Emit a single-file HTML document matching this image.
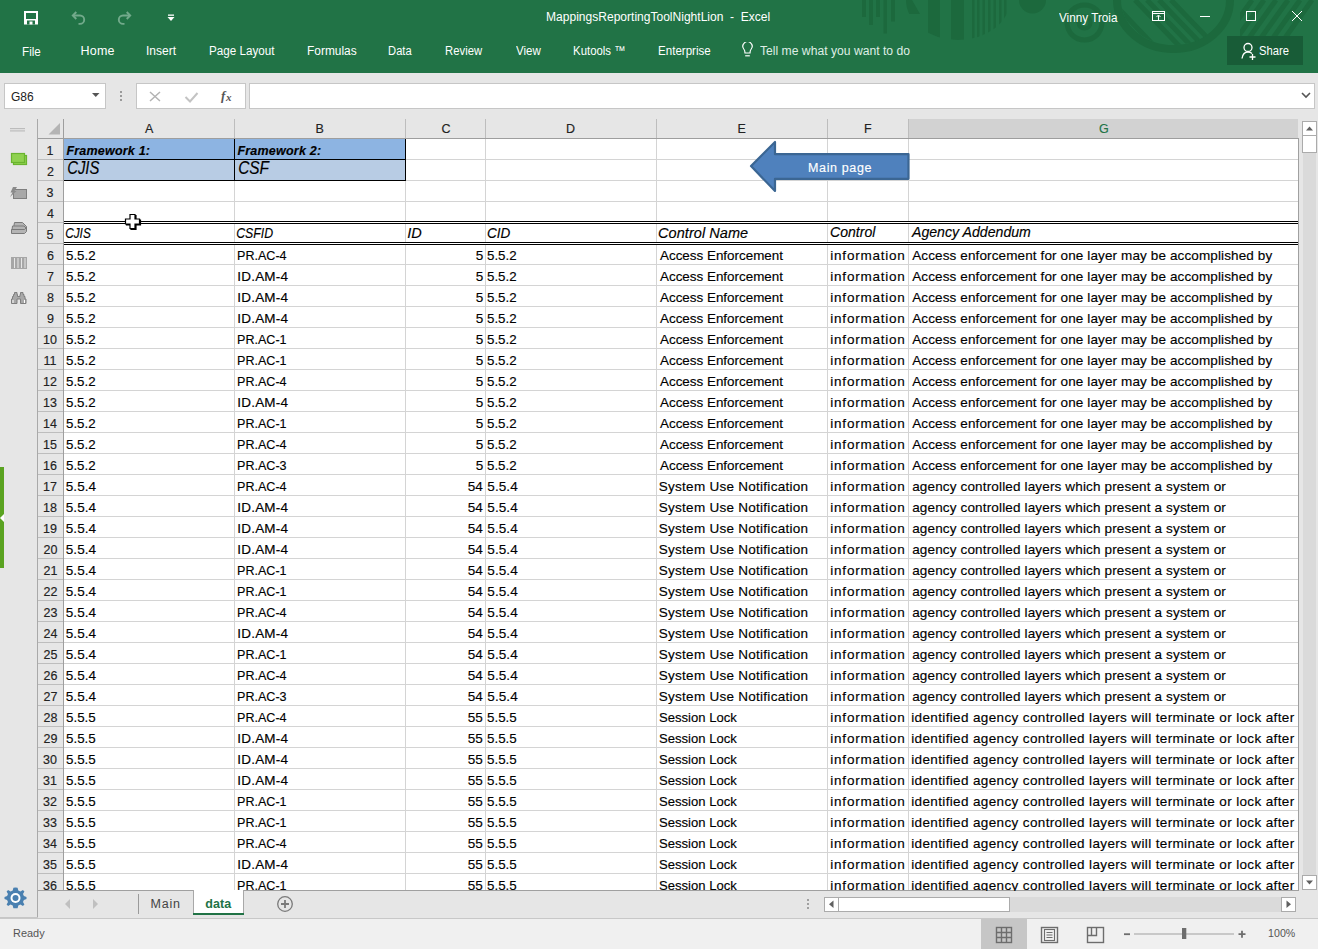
<!DOCTYPE html>
<html><head><meta charset="utf-8">
<style>
html,body{margin:0;padding:0;width:1318px;height:949px;overflow:hidden;background:#e6e6e6;font-family:"Liberation Sans",sans-serif;}
.a{position:absolute}
.t{position:absolute;white-space:pre;font-family:"Liberation Sans",sans-serif}
.g{-webkit-text-stroke:0.15px currentColor}
.vl{position:absolute;top:139px;height:751px;width:1px;background:#d4d4d4}
.hl{position:absolute;left:64px;width:1234px;height:1px;background:#d4d4d4}
</style></head><body>
<!-- ribbon -->
<div class="a" style="left:0;top:0;width:1318px;height:73px;background:#217346"></div>
<svg class="a" style="left:0;top:0" width="1318" height="73">
  <defs>
    <clipPath id="bowl1"><path d="M906 0 A52 40 0 0 0 1010 0 Z"/></clipPath>
    <clipPath id="bowl2"><path d="M1121 0 A53 45 0 0 0 1227 0 Z"/></clipPath>
    <clipPath id="rt"><rect x="1240" y="0" width="78" height="38"/></clipPath>
  </defs>
  <g fill="#1c693d">
    <rect x="862" y="0" width="4" height="17"/><rect x="869" y="0" width="4" height="25"/><rect x="876" y="0" width="4" height="17"/>
    <rect x="883.5" y="0" width="3.5" height="33.5"/><rect x="891" y="0" width="4" height="21.5"/>
    <g clip-path="url(#bowl1)">
      <path d="M906 0 L912 0 L920 14 L906 14 Z"/>
      <rect x="928" y="0" width="12" height="40"/>
      <rect x="951" y="0" width="13" height="40"/>
      <rect x="972" y="0" width="2.5" height="40"/><rect x="977" y="0" width="2.5" height="40"/><rect x="982.5" y="0" width="2.5" height="40"/>
      <rect x="988" y="0" width="2.5" height="40"/><rect x="993.5" y="0" width="2.5" height="40"/><rect x="999" y="0" width="2.5" height="40"/>
      <rect x="1004" y="0" width="2.5" height="40"/>
    </g>
    <path d="M1019 0 A13.5 13.5 0 0 0 1046 0 Z"/>
  </g>
  <g fill="none" stroke="#1c693d">
    <circle cx="1084.5" cy="22.5" r="17.5" stroke-width="5"/>
    <circle cx="1084.5" cy="22.5" r="6" stroke-width="4"/>
    <path d="M1117 0 A56.5 49 0 0 0 1230 0" stroke-width="8"/>
    <g clip-path="url(#bowl2)" stroke-width="5">
      <path d="M1135 0 L1185 52 M1147 0 L1197 52 M1159 0 L1209 52 M1171 0 L1221 52 M1120 10 L1160 52"/>
    </g>
    <g clip-path="url(#rt)" stroke-width="5">
      <path d="M1252 0 L1225 38 M1264 0 L1237 38 M1276 0 L1249 38 M1288 0 L1261 38 M1300 0 L1273 38 M1312 0 L1285 38"/>
    </g>
  </g>
</svg>
<!-- qat icons -->
<svg class="a" style="left:0;top:0" width="200" height="33">
  <rect x="24" y="11" width="14" height="13.5" fill="#fff"/>
  <rect x="26" y="13" width="10" height="6" fill="#217346"/>
  <rect x="27" y="20.5" width="8" height="4" fill="#217346"/>
  <rect x="29.5" y="21.5" width="3" height="3" fill="#fff"/>
  <g fill="none" stroke="#72aa8b" stroke-width="1.9">
    <path d="M73 15.5 H80 A4.2 4.2 0 0 1 80 23.9 H78.5"/><path d="M76.3 12 L72.8 15.5 L76.3 19"/>
    <path d="M130 15.5 H123 A4.2 4.2 0 0 0 123 23.9 H124.5"/><path d="M126.7 12 L130.2 15.5 L126.7 19"/>
  </g>
  <rect x="168" y="14.5" width="6" height="1.3" fill="#fff"/>
  <path d="M167.5 17 H174.5 L171 21 Z" fill="#fff"/>
</svg>
<!-- window controls -->
<svg class="a" style="left:1140px;top:0" width="178" height="33">
  <g fill="none" stroke="#fff" stroke-width="1">
    <rect x="12.5" y="11.5" width="12" height="9"/><path d="M12.5 13.5 H24.5"/><path d="M18.5 20.5 V15.5 M16.5 17 L18.5 15 L20.5 17"/>
    <path d="M60 16.5 H70"/>
    <rect x="106.5" y="11.5" width="9" height="9"/>
    <path d="M152 11 L162 21 M162 11 L152 21"/>
  </g>
</svg>
<!-- share -->
<div class="a" style="left:1227px;top:36px;width:76px;height:29px;background:#185c37"></div>
<svg class="a" style="left:1238px;top:40px" width="22" height="22">
  <g fill="none" stroke="#fff" stroke-width="1.3">
    <circle cx="10" cy="7.5" r="4"/><path d="M4 18.5 Q5 12 10 12 Q12.5 12 14 13.5"/><path d="M14.5 14 V20 M11.5 17 H17.5"/>
  </g>
</svg>
<!-- bulb -->
<svg class="a" style="left:740px;top:42px" width="16" height="16">
  <g fill="none" stroke="#fff" stroke-width="1.2">
    <path d="M5 11 Q5 8.5 3.8 7 A4.6 4.6 0 1 1 11.2 7 Q10 8.5 10 11 Z"/><path d="M5.2 13.8 H9.8"/>
  </g>
</svg>

<!-- formula bar -->
<div class="a" style="left:4px;top:83px;width:100px;height:24px;background:#fff;border:1px solid #c6c6c6"></div>
<svg class="a" style="left:90px;top:90px" width="12" height="10"><path d="M2 3 H9.5 L5.75 7 Z" fill="#555"/></svg>
<svg class="a" style="left:118px;top:89px" width="6" height="14"><g fill="#9a9a9a"><rect x="2" y="2" width="2" height="2"/><rect x="2" y="6" width="2" height="2"/><rect x="2" y="10" width="2" height="2"/></g></svg>
<div class="a" style="left:136px;top:83px;width:108px;height:24px;background:#fff;border:1px solid #c6c6c6"></div>
<svg class="a" style="left:140px;top:85px" width="105" height="22">
  <g fill="none" stroke="#b3b3b3" stroke-width="1.5"><path d="M10 7 L20 16 M20 7 L10 16"/></g>
  <g fill="none" stroke="#c3c3c3" stroke-width="2"><path d="M45.5 12 L50 16.5 L57.5 8"/></g>
  <text x="81" y="15" font-family="Liberation Serif" font-style="italic" font-weight="bold" font-size="13" fill="#555">f</text>
  <text x="86" y="15.5" font-family="Liberation Serif" font-style="italic" font-weight="bold" font-size="11" fill="#555">x</text>
</svg>
<div class="a" style="left:249px;top:83px;width:1064px;height:24px;background:#fff;border:1px solid #c6c6c6"></div>
<svg class="a" style="left:1300px;top:90px" width="12" height="10"><path d="M2 3 L6 7 L10 3" fill="none" stroke="#555" stroke-width="1.6"/></svg>

<!-- left pane -->
<div class="a" style="left:37px;top:119px;width:1px;height:798px;background:#a9a9a9"></div>
<svg class="a" style="left:0;top:118px" width="37" height="200">
  <g fill="#bcbcbc"><rect x="10" y="10" width="15" height="1.2"/><rect x="10" y="12.3" width="15" height="1.2"/></g>
  <rect x="13.5" y="37.5" width="13" height="9" fill="#8fd14f" stroke="#6ab42f" stroke-width="1.2"/>
  <rect x="11.5" y="35.5" width="13" height="9" fill="#8fd14f" stroke="#6ab42f" stroke-width="1.2"/>
  <rect x="13.5" y="71.5" width="13" height="9" fill="#a8a8a8" stroke="#7f7f7f" stroke-width="1"/>
  <path d="M13 69 H17 L14.5 73 H16.5 L10 79 L12.5 74.5 H10.5 Z" fill="#8a8a8a"/>
  <g fill="#b4b4b4" stroke="#7a7a7a" stroke-width="1">
    <path d="M14.5 104.5 H22.5 L26.5 108.5 V110 H13.5 Z"/>
    <path d="M12.5 108 H24 L26.5 110.5 V112 H12 Z"/>
    <path d="M11.5 111.5 H24.5 L26.5 109.5 V113.5 L24.5 115.5 H11.5 Z"/>
  </g>
  <g fill="#a6a6a6"><rect x="11" y="139" width="16" height="12"/></g>
  <g fill="#e6e6e6"><rect x="14" y="140" width="1" height="10"/><rect x="17.5" y="140" width="1" height="10"/><rect x="21" y="140" width="1" height="10"/><rect x="24.5" y="140" width="1" height="10"/></g>
  <g fill="#a0a0a0">
    <path d="M11.5 185.5 V181 H12.5 V178.5 H13.5 V176.5 H14.5 V174.5 H17 V176.5 H17.5 V178.5 H20 V176.5 H20.5 V174.5 H23 V176.5 H24 V178.5 H25 V181 H26 V185.5 H20.5 V181 H17 V185.5 Z" fill="#a8a8a8" stroke="#7f7f7f" stroke-width="1"/><rect x="12.5" y="182" width="1" height="3" fill="#fff"/><rect x="24" y="182" width="1" height="3" fill="#fff"/>
  </g>
</svg>
<div class="a" style="left:0;top:467px;width:4px;height:101px;background:#5aa321"></div>
<svg class="a" style="left:0;top:512px" width="4" height="12"><path d="M4 2 L0 6 L4 10 Z" fill="#fff"/></svg>
<svg class="a" style="left:3px;top:886px" width="25" height="24">
  <path fill="#4a80b0" d="M12.5 1.5 L14.6 1.8 L15.3 4.6 L17.4 5.5 L19.9 4 L21.4 5.5 L20 8 L20.9 10.1 L23.5 10.9 V13.1 L20.9 13.9 L20 16 L21.4 18.5 L19.9 20 L17.4 18.6 L15.3 19.4 L14.6 22.2 H10.4 L9.7 19.4 L7.6 18.6 L5.1 20 L3.6 18.5 L5 16 L4.1 13.9 L1.5 13.1 V10.9 L4.1 10.1 L5 8 L3.6 5.5 L5.1 4 L7.6 5.5 L9.7 4.6 L10.4 1.8 Z"/>
  <circle cx="12.5" cy="12" r="5" fill="#fff"/><circle cx="12.5" cy="12" r="3" fill="#4a80b0"/>
</svg>

<!-- grid area -->
<div class="a" style="left:38px;top:119px;width:1260px;height:771px;background:#fff"></div>
<!-- headers -->
<div class="a" style="left:38px;top:119px;width:1260px;height:19px;background:#e6e6e6"></div>
<div class="a" style="left:909px;top:119px;width:389px;height:19px;background:#d2d2d2"></div>
<div class="a" style="left:38px;top:139px;width:25px;height:751px;background:#e6e6e6"></div>
<div class="a" style="left:38px;top:138px;width:1260px;height:1px;background:#9e9e9e"></div>
<div class="a" style="left:63px;top:119px;width:1px;height:771px;background:#9e9e9e"></div>
<svg class="a" style="left:38px;top:119px" width="25" height="19"><path d="M10.5 15.5 L22 15.5 L22 4 Z" fill="#b4b4b4"/></svg>
<div style="position:absolute;left:234px;width:1px;top:119px;height:19px;background:#bdbdbd"></div>
<div style="position:absolute;left:405px;width:1px;top:119px;height:19px;background:#bdbdbd"></div>
<div style="position:absolute;left:485px;width:1px;top:119px;height:19px;background:#bdbdbd"></div>
<div style="position:absolute;left:656px;width:1px;top:119px;height:19px;background:#bdbdbd"></div>
<div style="position:absolute;left:827px;width:1px;top:119px;height:19px;background:#bdbdbd"></div>
<div style="position:absolute;left:908px;width:1px;top:119px;height:19px;background:#bdbdbd"></div>
<div style="position:absolute;left:38px;width:25px;top:159px;height:1px;background:#bdbdbd"></div>
<div style="position:absolute;left:38px;width:25px;top:180px;height:1px;background:#bdbdbd"></div>
<div style="position:absolute;left:38px;width:25px;top:201px;height:1px;background:#bdbdbd"></div>
<div style="position:absolute;left:38px;width:25px;top:222px;height:1px;background:#bdbdbd"></div>
<div style="position:absolute;left:38px;width:25px;top:243px;height:1px;background:#bdbdbd"></div>
<div style="position:absolute;left:38px;width:25px;top:264px;height:1px;background:#bdbdbd"></div>
<div style="position:absolute;left:38px;width:25px;top:285px;height:1px;background:#bdbdbd"></div>
<div style="position:absolute;left:38px;width:25px;top:306px;height:1px;background:#bdbdbd"></div>
<div style="position:absolute;left:38px;width:25px;top:327px;height:1px;background:#bdbdbd"></div>
<div style="position:absolute;left:38px;width:25px;top:348px;height:1px;background:#bdbdbd"></div>
<div style="position:absolute;left:38px;width:25px;top:369px;height:1px;background:#bdbdbd"></div>
<div style="position:absolute;left:38px;width:25px;top:390px;height:1px;background:#bdbdbd"></div>
<div style="position:absolute;left:38px;width:25px;top:411px;height:1px;background:#bdbdbd"></div>
<div style="position:absolute;left:38px;width:25px;top:432px;height:1px;background:#bdbdbd"></div>
<div style="position:absolute;left:38px;width:25px;top:453px;height:1px;background:#bdbdbd"></div>
<div style="position:absolute;left:38px;width:25px;top:474px;height:1px;background:#bdbdbd"></div>
<div style="position:absolute;left:38px;width:25px;top:495px;height:1px;background:#bdbdbd"></div>
<div style="position:absolute;left:38px;width:25px;top:516px;height:1px;background:#bdbdbd"></div>
<div style="position:absolute;left:38px;width:25px;top:537px;height:1px;background:#bdbdbd"></div>
<div style="position:absolute;left:38px;width:25px;top:558px;height:1px;background:#bdbdbd"></div>
<div style="position:absolute;left:38px;width:25px;top:579px;height:1px;background:#bdbdbd"></div>
<div style="position:absolute;left:38px;width:25px;top:600px;height:1px;background:#bdbdbd"></div>
<div style="position:absolute;left:38px;width:25px;top:621px;height:1px;background:#bdbdbd"></div>
<div style="position:absolute;left:38px;width:25px;top:642px;height:1px;background:#bdbdbd"></div>
<div style="position:absolute;left:38px;width:25px;top:663px;height:1px;background:#bdbdbd"></div>
<div style="position:absolute;left:38px;width:25px;top:684px;height:1px;background:#bdbdbd"></div>
<div style="position:absolute;left:38px;width:25px;top:705px;height:1px;background:#bdbdbd"></div>
<div style="position:absolute;left:38px;width:25px;top:726px;height:1px;background:#bdbdbd"></div>
<div style="position:absolute;left:38px;width:25px;top:747px;height:1px;background:#bdbdbd"></div>
<div style="position:absolute;left:38px;width:25px;top:768px;height:1px;background:#bdbdbd"></div>
<div style="position:absolute;left:38px;width:25px;top:789px;height:1px;background:#bdbdbd"></div>
<div style="position:absolute;left:38px;width:25px;top:810px;height:1px;background:#bdbdbd"></div>
<div style="position:absolute;left:38px;width:25px;top:831px;height:1px;background:#bdbdbd"></div>
<div style="position:absolute;left:38px;width:25px;top:852px;height:1px;background:#bdbdbd"></div>
<div style="position:absolute;left:38px;width:25px;top:873px;height:1px;background:#bdbdbd"></div>
<div style="position:absolute;left:38px;width:25px;top:894px;height:1px;background:#bdbdbd"></div>
<!-- fills -->
<div class="a" style="left:64px;top:139px;width:341px;height:20px;background:#8db4e2"></div>
<div class="a" style="left:64px;top:160px;width:341px;height:20px;background:#b8cce4"></div>
<div class="vl" style="left:234px"></div>
<div class="vl" style="left:405px"></div>
<div class="vl" style="left:485px"></div>
<div class="vl" style="left:656px"></div>
<div class="vl" style="left:827px"></div>
<div class="vl" style="left:908px"></div>
<div class="hl" style="top:159px"></div>
<div class="hl" style="top:180px"></div>
<div class="hl" style="top:201px"></div>
<div class="hl" style="top:222px"></div>
<div class="hl" style="top:243px"></div>
<div class="hl" style="top:264px"></div>
<div class="hl" style="top:285px"></div>
<div class="hl" style="top:306px"></div>
<div class="hl" style="top:327px"></div>
<div class="hl" style="top:348px"></div>
<div class="hl" style="top:369px"></div>
<div class="hl" style="top:390px"></div>
<div class="hl" style="top:411px"></div>
<div class="hl" style="top:432px"></div>
<div class="hl" style="top:453px"></div>
<div class="hl" style="top:474px"></div>
<div class="hl" style="top:495px"></div>
<div class="hl" style="top:516px"></div>
<div class="hl" style="top:537px"></div>
<div class="hl" style="top:558px"></div>
<div class="hl" style="top:579px"></div>
<div class="hl" style="top:600px"></div>
<div class="hl" style="top:621px"></div>
<div class="hl" style="top:642px"></div>
<div class="hl" style="top:663px"></div>
<div class="hl" style="top:684px"></div>
<div class="hl" style="top:705px"></div>
<div class="hl" style="top:726px"></div>
<div class="hl" style="top:747px"></div>
<div class="hl" style="top:768px"></div>
<div class="hl" style="top:789px"></div>
<div class="hl" style="top:810px"></div>
<div class="hl" style="top:831px"></div>
<div class="hl" style="top:852px"></div>
<div class="hl" style="top:873px"></div>
<div class="hl" style="top:894px"></div>
<!-- borders -->
<div class="a" style="left:64px;top:159px;width:342px;height:1px;background:#000"></div>
<div class="a" style="left:64px;top:180px;width:342px;height:1px;background:#000"></div>
<div class="a" style="left:234px;top:139px;width:1px;height:42px;background:#000"></div>
<div class="a" style="left:405px;top:139px;width:1px;height:42px;background:#000"></div>
<div class="a" style="left:64px;top:221px;width:1234px;height:1px;background:#000"></div>
<div class="a" style="left:64px;top:223px;width:1234px;height:1px;background:#000"></div>
<div class="a" style="left:64px;top:222px;width:1234px;height:1px;background:#fff"></div>
<div class="a" style="left:64px;top:242px;width:1234px;height:1px;background:#000"></div>
<div class="a" style="left:64px;top:244px;width:1234px;height:1px;background:#000"></div>
<div class="a" style="left:64px;top:243px;width:1234px;height:1px;background:#fff"></div>
<!-- right border of grid -->
<div class="a" style="left:1298px;top:138px;width:1px;height:753px;background:#a0a0a0"></div>
<div class="a" style="left:38px;top:890px;width:1261px;height:1px;background:#a0a0a0"></div>
<!-- arrow shape -->
<svg class="a" style="left:740px;top:132px" width="180" height="68">
  <path d="M11 34.1 L35 10 V22.2 H168.5 V46.8 H35 V59 Z" fill="#4f81bd" stroke="#3b6693" stroke-width="2.2" stroke-linejoin="round"/>
</svg>
<div class="t g" style="left:145.00px;top:123.42px;font-size:12.5px;line-height:12.5px;color:#222;">A</div>
<div class="t g" style="left:315.50px;top:123.42px;font-size:12.5px;line-height:12.5px;color:#222;">B</div>
<div class="t g" style="left:441.50px;top:123.42px;font-size:12.5px;line-height:12.5px;color:#222;">C</div>
<div class="t g" style="left:566.00px;top:123.42px;font-size:12.5px;line-height:12.5px;color:#222;">D</div>
<div class="t g" style="left:737.50px;top:123.42px;font-size:12.5px;line-height:12.5px;color:#222;">E</div>
<div class="t g" style="left:864.00px;top:123.42px;font-size:12.5px;line-height:12.5px;color:#222;">F</div>
<div class="t g" style="left:1099.00px;top:123.42px;font-size:12.5px;line-height:12.5px;color:#217346;">G</div>
<div class="t g" style="left:46.50px;top:145.42px;font-size:12.5px;line-height:12.5px;color:#222;">1</div>
<div class="t g" style="left:47.00px;top:166.42px;font-size:12.5px;line-height:12.5px;color:#222;">2</div>
<div class="t g" style="left:46.50px;top:187.42px;font-size:12.5px;line-height:12.5px;color:#222;">3</div>
<div class="t g" style="left:47.00px;top:208.42px;font-size:12.5px;line-height:12.5px;color:#222;">4</div>
<div class="t g" style="left:46.50px;top:229.42px;font-size:12.5px;line-height:12.5px;color:#222;">5</div>
<div class="t g" style="left:47.00px;top:250.42px;font-size:12.5px;line-height:12.5px;color:#222;">6</div>
<div class="t g" style="left:47.00px;top:271.42px;font-size:12.5px;line-height:12.5px;color:#222;">7</div>
<div class="t g" style="left:47.00px;top:292.42px;font-size:12.5px;line-height:12.5px;color:#222;">8</div>
<div class="t g" style="left:47.00px;top:313.42px;font-size:12.5px;line-height:12.5px;color:#222;">9</div>
<div class="t g" style="left:43.00px;top:334.42px;font-size:12.5px;line-height:12.5px;color:#222;">10</div>
<div class="t g" style="left:43.50px;top:355.42px;font-size:12.5px;line-height:12.5px;color:#222;">11</div>
<div class="t g" style="left:43.00px;top:376.42px;font-size:12.5px;line-height:12.5px;color:#222;">12</div>
<div class="t g" style="left:43.00px;top:397.42px;font-size:12.5px;line-height:12.5px;color:#222;">13</div>
<div class="t g" style="left:43.00px;top:418.42px;font-size:12.5px;line-height:12.5px;color:#222;">14</div>
<div class="t g" style="left:43.00px;top:439.42px;font-size:12.5px;line-height:12.5px;color:#222;">15</div>
<div class="t g" style="left:43.00px;top:460.42px;font-size:12.5px;line-height:12.5px;color:#222;">16</div>
<div class="t g" style="left:43.00px;top:481.42px;font-size:12.5px;line-height:12.5px;color:#222;">17</div>
<div class="t g" style="left:43.00px;top:502.42px;font-size:12.5px;line-height:12.5px;color:#222;">18</div>
<div class="t g" style="left:43.00px;top:523.42px;font-size:12.5px;line-height:12.5px;color:#222;">19</div>
<div class="t g" style="left:43.50px;top:544.42px;font-size:12.5px;line-height:12.5px;color:#222;">20</div>
<div class="t g" style="left:43.50px;top:565.42px;font-size:12.5px;line-height:12.5px;color:#222;">21</div>
<div class="t g" style="left:43.50px;top:586.42px;font-size:12.5px;line-height:12.5px;color:#222;">22</div>
<div class="t g" style="left:43.50px;top:607.42px;font-size:12.5px;line-height:12.5px;color:#222;">23</div>
<div class="t g" style="left:43.50px;top:628.42px;font-size:12.5px;line-height:12.5px;color:#222;">24</div>
<div class="t g" style="left:43.50px;top:649.42px;font-size:12.5px;line-height:12.5px;color:#222;">25</div>
<div class="t g" style="left:43.50px;top:670.42px;font-size:12.5px;line-height:12.5px;color:#222;">26</div>
<div class="t g" style="left:43.50px;top:691.42px;font-size:12.5px;line-height:12.5px;color:#222;">27</div>
<div class="t g" style="left:43.50px;top:712.42px;font-size:12.5px;line-height:12.5px;color:#222;">28</div>
<div class="t g" style="left:43.50px;top:733.42px;font-size:12.5px;line-height:12.5px;color:#222;">29</div>
<div class="t g" style="left:43.00px;top:754.42px;font-size:12.5px;line-height:12.5px;color:#222;">30</div>
<div class="t g" style="left:43.00px;top:775.42px;font-size:12.5px;line-height:12.5px;color:#222;">31</div>
<div class="t g" style="left:43.00px;top:796.42px;font-size:12.5px;line-height:12.5px;color:#222;">32</div>
<div class="t g" style="left:43.00px;top:817.42px;font-size:12.5px;line-height:12.5px;color:#222;">33</div>
<div class="t g" style="left:43.00px;top:838.42px;font-size:12.5px;line-height:12.5px;color:#222;">34</div>
<div class="t g" style="left:43.00px;top:859.42px;font-size:12.5px;line-height:12.5px;color:#222;">35</div>
<div class="t g" style="left:43.00px;top:880.42px;font-size:12.5px;line-height:12.5px;color:#222;">36</div>
<div class="t g" style="left:66.40px;top:145.42px;font-size:12.5px;line-height:12.5px;color:#000;font-weight:bold;font-style:italic;letter-spacing:0.209px">Framework 1:</div>
<div class="t g" style="left:237.40px;top:145.42px;font-size:12.5px;line-height:12.5px;color:#000;font-weight:bold;font-style:italic;letter-spacing:0.227px">Framework 2:</div>
<div class="t g" style="left:67.00px;top:158.76px;font-size:18px;line-height:18px;color:#000;font-style:italic;transform-origin:1px 0;transform:scaleX(0.8237)">CJIS</div>
<div class="t g" style="left:237.50px;top:158.76px;font-size:18px;line-height:18px;color:#000;font-style:italic;transform-origin:1px 0;transform:scaleX(0.8556)">CSF</div>
<div class="t g" style="left:808.00px;top:162.42px;font-size:12.5px;line-height:12.5px;color:#fff;;letter-spacing:0.638px">Main page</div>
<div class="t g" style="left:65.30px;top:225.73px;font-size:14.5px;line-height:14.5px;color:#000;font-style:italic;transform-origin:1px 0;transform:scaleX(0.8133)">CJIS</div>
<div class="t g" style="left:236.30px;top:225.73px;font-size:14.5px;line-height:14.5px;color:#000;font-style:italic;transform-origin:1px 0;transform:scaleX(0.8476)">CSFID</div>
<div class="t g" style="left:407.30px;top:225.73px;font-size:14.5px;line-height:14.5px;color:#000;font-style:italic">ID</div>
<div class="t g" style="left:486.60px;top:225.73px;font-size:14.5px;line-height:14.5px;color:#000;font-style:italic;transform-origin:1px 0;transform:scaleX(0.9333)">CID</div>
<div class="t g" style="left:658.10px;top:225.73px;font-size:14.5px;line-height:14.5px;color:#000;font-style:italic;letter-spacing:0.055px">Control Name</div>
<div class="t g" style="left:829.60px;top:224.73px;font-size:14.5px;line-height:14.5px;color:#000;font-style:italic;transform-origin:1px 0;transform:scaleX(0.9696)">Control</div>
<div class="t g" style="left:912.00px;top:224.73px;font-size:14.5px;line-height:14.5px;color:#000;font-style:italic;transform-origin:-1px 0;transform:scaleX(0.9748)">Agency Addendum</div>
<div class="t g" style="left:65.70px;top:248.57px;font-size:13.5px;line-height:13.5px;color:#000;;transform-origin:1px 0;transform:scaleX(0.9862)">5.5.2</div>
<div class="t g" style="left:237.30px;top:248.57px;font-size:13.5px;line-height:13.5px;color:#000;;transform-origin:1px 0;transform:scaleX(0.9288)">PR.AC-4</div>
<div class="t g" style="left:475.70px;top:248.57px;font-size:13.5px;line-height:13.5px;color:#000;">5</div>
<div class="t g" style="left:487.30px;top:248.57px;font-size:13.5px;line-height:13.5px;color:#000;;transform-origin:1px 0;transform:scaleX(0.9862)">5.5.2</div>
<div class="t g" style="left:659.80px;top:248.57px;font-size:13.5px;line-height:13.5px;color:#000;;transform-origin:0px 0;transform:scaleX(0.9935)">Access Enforcement</div>
<div class="t g" style="left:830.30px;top:248.57px;font-size:13.5px;line-height:13.5px;color:#000;;letter-spacing:0.780px">information</div>
<div class="t g" style="left:912.20px;top:248.57px;font-size:13.5px;line-height:13.5px;color:#000;;letter-spacing:0.122px">Access enforcement for one layer may be accomplished by</div>
<div class="t g" style="left:65.70px;top:269.57px;font-size:13.5px;line-height:13.5px;color:#000;;transform-origin:1px 0;transform:scaleX(0.9862)">5.5.2</div>
<div class="t g" style="left:237.30px;top:269.57px;font-size:13.5px;line-height:13.5px;color:#000;;letter-spacing:0.200px">ID.AM-4</div>
<div class="t g" style="left:475.70px;top:269.57px;font-size:13.5px;line-height:13.5px;color:#000;">5</div>
<div class="t g" style="left:487.30px;top:269.57px;font-size:13.5px;line-height:13.5px;color:#000;;transform-origin:1px 0;transform:scaleX(0.9862)">5.5.2</div>
<div class="t g" style="left:659.80px;top:269.57px;font-size:13.5px;line-height:13.5px;color:#000;;transform-origin:0px 0;transform:scaleX(0.9935)">Access Enforcement</div>
<div class="t g" style="left:830.30px;top:269.57px;font-size:13.5px;line-height:13.5px;color:#000;;letter-spacing:0.780px">information</div>
<div class="t g" style="left:912.20px;top:269.57px;font-size:13.5px;line-height:13.5px;color:#000;;letter-spacing:0.122px">Access enforcement for one layer may be accomplished by</div>
<div class="t g" style="left:65.70px;top:290.57px;font-size:13.5px;line-height:13.5px;color:#000;;transform-origin:1px 0;transform:scaleX(0.9862)">5.5.2</div>
<div class="t g" style="left:237.30px;top:290.57px;font-size:13.5px;line-height:13.5px;color:#000;;letter-spacing:0.200px">ID.AM-4</div>
<div class="t g" style="left:475.70px;top:290.57px;font-size:13.5px;line-height:13.5px;color:#000;">5</div>
<div class="t g" style="left:487.30px;top:290.57px;font-size:13.5px;line-height:13.5px;color:#000;;transform-origin:1px 0;transform:scaleX(0.9862)">5.5.2</div>
<div class="t g" style="left:659.80px;top:290.57px;font-size:13.5px;line-height:13.5px;color:#000;;transform-origin:0px 0;transform:scaleX(0.9935)">Access Enforcement</div>
<div class="t g" style="left:830.30px;top:290.57px;font-size:13.5px;line-height:13.5px;color:#000;;letter-spacing:0.780px">information</div>
<div class="t g" style="left:912.20px;top:290.57px;font-size:13.5px;line-height:13.5px;color:#000;;letter-spacing:0.122px">Access enforcement for one layer may be accomplished by</div>
<div class="t g" style="left:65.70px;top:311.57px;font-size:13.5px;line-height:13.5px;color:#000;;transform-origin:1px 0;transform:scaleX(0.9862)">5.5.2</div>
<div class="t g" style="left:237.30px;top:311.57px;font-size:13.5px;line-height:13.5px;color:#000;;letter-spacing:0.200px">ID.AM-4</div>
<div class="t g" style="left:475.70px;top:311.57px;font-size:13.5px;line-height:13.5px;color:#000;">5</div>
<div class="t g" style="left:487.30px;top:311.57px;font-size:13.5px;line-height:13.5px;color:#000;;transform-origin:1px 0;transform:scaleX(0.9862)">5.5.2</div>
<div class="t g" style="left:659.80px;top:311.57px;font-size:13.5px;line-height:13.5px;color:#000;;transform-origin:0px 0;transform:scaleX(0.9935)">Access Enforcement</div>
<div class="t g" style="left:830.30px;top:311.57px;font-size:13.5px;line-height:13.5px;color:#000;;letter-spacing:0.780px">information</div>
<div class="t g" style="left:912.20px;top:311.57px;font-size:13.5px;line-height:13.5px;color:#000;;letter-spacing:0.122px">Access enforcement for one layer may be accomplished by</div>
<div class="t g" style="left:65.70px;top:332.57px;font-size:13.5px;line-height:13.5px;color:#000;;transform-origin:1px 0;transform:scaleX(0.9862)">5.5.2</div>
<div class="t g" style="left:237.30px;top:332.57px;font-size:13.5px;line-height:13.5px;color:#000;;transform-origin:1px 0;transform:scaleX(0.9288)">PR.AC-1</div>
<div class="t g" style="left:475.70px;top:332.57px;font-size:13.5px;line-height:13.5px;color:#000;">5</div>
<div class="t g" style="left:487.30px;top:332.57px;font-size:13.5px;line-height:13.5px;color:#000;;transform-origin:1px 0;transform:scaleX(0.9862)">5.5.2</div>
<div class="t g" style="left:659.80px;top:332.57px;font-size:13.5px;line-height:13.5px;color:#000;;transform-origin:0px 0;transform:scaleX(0.9935)">Access Enforcement</div>
<div class="t g" style="left:830.30px;top:332.57px;font-size:13.5px;line-height:13.5px;color:#000;;letter-spacing:0.780px">information</div>
<div class="t g" style="left:912.20px;top:332.57px;font-size:13.5px;line-height:13.5px;color:#000;;letter-spacing:0.122px">Access enforcement for one layer may be accomplished by</div>
<div class="t g" style="left:65.70px;top:353.57px;font-size:13.5px;line-height:13.5px;color:#000;;transform-origin:1px 0;transform:scaleX(0.9862)">5.5.2</div>
<div class="t g" style="left:237.30px;top:353.57px;font-size:13.5px;line-height:13.5px;color:#000;;transform-origin:1px 0;transform:scaleX(0.9288)">PR.AC-1</div>
<div class="t g" style="left:475.70px;top:353.57px;font-size:13.5px;line-height:13.5px;color:#000;">5</div>
<div class="t g" style="left:487.30px;top:353.57px;font-size:13.5px;line-height:13.5px;color:#000;;transform-origin:1px 0;transform:scaleX(0.9862)">5.5.2</div>
<div class="t g" style="left:659.80px;top:353.57px;font-size:13.5px;line-height:13.5px;color:#000;;transform-origin:0px 0;transform:scaleX(0.9935)">Access Enforcement</div>
<div class="t g" style="left:830.30px;top:353.57px;font-size:13.5px;line-height:13.5px;color:#000;;letter-spacing:0.780px">information</div>
<div class="t g" style="left:912.20px;top:353.57px;font-size:13.5px;line-height:13.5px;color:#000;;letter-spacing:0.122px">Access enforcement for one layer may be accomplished by</div>
<div class="t g" style="left:65.70px;top:374.57px;font-size:13.5px;line-height:13.5px;color:#000;;transform-origin:1px 0;transform:scaleX(0.9862)">5.5.2</div>
<div class="t g" style="left:237.30px;top:374.57px;font-size:13.5px;line-height:13.5px;color:#000;;transform-origin:1px 0;transform:scaleX(0.9288)">PR.AC-4</div>
<div class="t g" style="left:475.70px;top:374.57px;font-size:13.5px;line-height:13.5px;color:#000;">5</div>
<div class="t g" style="left:487.30px;top:374.57px;font-size:13.5px;line-height:13.5px;color:#000;;transform-origin:1px 0;transform:scaleX(0.9862)">5.5.2</div>
<div class="t g" style="left:659.80px;top:374.57px;font-size:13.5px;line-height:13.5px;color:#000;;transform-origin:0px 0;transform:scaleX(0.9935)">Access Enforcement</div>
<div class="t g" style="left:830.30px;top:374.57px;font-size:13.5px;line-height:13.5px;color:#000;;letter-spacing:0.780px">information</div>
<div class="t g" style="left:912.20px;top:374.57px;font-size:13.5px;line-height:13.5px;color:#000;;letter-spacing:0.122px">Access enforcement for one layer may be accomplished by</div>
<div class="t g" style="left:65.70px;top:395.57px;font-size:13.5px;line-height:13.5px;color:#000;;transform-origin:1px 0;transform:scaleX(0.9862)">5.5.2</div>
<div class="t g" style="left:237.30px;top:395.57px;font-size:13.5px;line-height:13.5px;color:#000;;letter-spacing:0.200px">ID.AM-4</div>
<div class="t g" style="left:475.70px;top:395.57px;font-size:13.5px;line-height:13.5px;color:#000;">5</div>
<div class="t g" style="left:487.30px;top:395.57px;font-size:13.5px;line-height:13.5px;color:#000;;transform-origin:1px 0;transform:scaleX(0.9862)">5.5.2</div>
<div class="t g" style="left:659.80px;top:395.57px;font-size:13.5px;line-height:13.5px;color:#000;;transform-origin:0px 0;transform:scaleX(0.9935)">Access Enforcement</div>
<div class="t g" style="left:830.30px;top:395.57px;font-size:13.5px;line-height:13.5px;color:#000;;letter-spacing:0.780px">information</div>
<div class="t g" style="left:912.20px;top:395.57px;font-size:13.5px;line-height:13.5px;color:#000;;letter-spacing:0.122px">Access enforcement for one layer may be accomplished by</div>
<div class="t g" style="left:65.70px;top:416.57px;font-size:13.5px;line-height:13.5px;color:#000;;transform-origin:1px 0;transform:scaleX(0.9862)">5.5.2</div>
<div class="t g" style="left:237.30px;top:416.57px;font-size:13.5px;line-height:13.5px;color:#000;;transform-origin:1px 0;transform:scaleX(0.9288)">PR.AC-1</div>
<div class="t g" style="left:475.70px;top:416.57px;font-size:13.5px;line-height:13.5px;color:#000;">5</div>
<div class="t g" style="left:487.30px;top:416.57px;font-size:13.5px;line-height:13.5px;color:#000;;transform-origin:1px 0;transform:scaleX(0.9862)">5.5.2</div>
<div class="t g" style="left:659.80px;top:416.57px;font-size:13.5px;line-height:13.5px;color:#000;;transform-origin:0px 0;transform:scaleX(0.9935)">Access Enforcement</div>
<div class="t g" style="left:830.30px;top:416.57px;font-size:13.5px;line-height:13.5px;color:#000;;letter-spacing:0.780px">information</div>
<div class="t g" style="left:912.20px;top:416.57px;font-size:13.5px;line-height:13.5px;color:#000;;letter-spacing:0.122px">Access enforcement for one layer may be accomplished by</div>
<div class="t g" style="left:65.70px;top:437.57px;font-size:13.5px;line-height:13.5px;color:#000;;transform-origin:1px 0;transform:scaleX(0.9862)">5.5.2</div>
<div class="t g" style="left:237.30px;top:437.57px;font-size:13.5px;line-height:13.5px;color:#000;;transform-origin:1px 0;transform:scaleX(0.9288)">PR.AC-4</div>
<div class="t g" style="left:475.70px;top:437.57px;font-size:13.5px;line-height:13.5px;color:#000;">5</div>
<div class="t g" style="left:487.30px;top:437.57px;font-size:13.5px;line-height:13.5px;color:#000;;transform-origin:1px 0;transform:scaleX(0.9862)">5.5.2</div>
<div class="t g" style="left:659.80px;top:437.57px;font-size:13.5px;line-height:13.5px;color:#000;;transform-origin:0px 0;transform:scaleX(0.9935)">Access Enforcement</div>
<div class="t g" style="left:830.30px;top:437.57px;font-size:13.5px;line-height:13.5px;color:#000;;letter-spacing:0.780px">information</div>
<div class="t g" style="left:912.20px;top:437.57px;font-size:13.5px;line-height:13.5px;color:#000;;letter-spacing:0.122px">Access enforcement for one layer may be accomplished by</div>
<div class="t g" style="left:65.70px;top:458.57px;font-size:13.5px;line-height:13.5px;color:#000;;transform-origin:1px 0;transform:scaleX(0.9862)">5.5.2</div>
<div class="t g" style="left:237.30px;top:458.57px;font-size:13.5px;line-height:13.5px;color:#000;;transform-origin:1px 0;transform:scaleX(0.9288)">PR.AC-3</div>
<div class="t g" style="left:475.70px;top:458.57px;font-size:13.5px;line-height:13.5px;color:#000;">5</div>
<div class="t g" style="left:487.30px;top:458.57px;font-size:13.5px;line-height:13.5px;color:#000;;transform-origin:1px 0;transform:scaleX(0.9862)">5.5.2</div>
<div class="t g" style="left:659.80px;top:458.57px;font-size:13.5px;line-height:13.5px;color:#000;;transform-origin:0px 0;transform:scaleX(0.9935)">Access Enforcement</div>
<div class="t g" style="left:830.30px;top:458.57px;font-size:13.5px;line-height:13.5px;color:#000;;letter-spacing:0.780px">information</div>
<div class="t g" style="left:912.20px;top:458.57px;font-size:13.5px;line-height:13.5px;color:#000;;letter-spacing:0.122px">Access enforcement for one layer may be accomplished by</div>
<div class="t g" style="left:65.70px;top:479.57px;font-size:13.5px;line-height:13.5px;color:#000;;letter-spacing:0.100px">5.5.4</div>
<div class="t g" style="left:237.30px;top:479.57px;font-size:13.5px;line-height:13.5px;color:#000;;transform-origin:1px 0;transform:scaleX(0.9288)">PR.AC-4</div>
<div class="t g" style="left:467.70px;top:479.57px;font-size:13.5px;line-height:13.5px;color:#000;">54</div>
<div class="t g" style="left:487.30px;top:479.57px;font-size:13.5px;line-height:13.5px;color:#000;;letter-spacing:0.100px">5.5.4</div>
<div class="t g" style="left:658.80px;top:479.57px;font-size:13.5px;line-height:13.5px;color:#000;;letter-spacing:0.268px">System Use Notification</div>
<div class="t g" style="left:830.30px;top:479.57px;font-size:13.5px;line-height:13.5px;color:#000;;letter-spacing:0.780px">information</div>
<div class="t g" style="left:912.20px;top:479.57px;font-size:13.5px;line-height:13.5px;color:#000;;letter-spacing:0.153px">agency controlled layers which present a system or</div>
<div class="t g" style="left:65.70px;top:500.57px;font-size:13.5px;line-height:13.5px;color:#000;;letter-spacing:0.100px">5.5.4</div>
<div class="t g" style="left:237.30px;top:500.57px;font-size:13.5px;line-height:13.5px;color:#000;;letter-spacing:0.200px">ID.AM-4</div>
<div class="t g" style="left:467.70px;top:500.57px;font-size:13.5px;line-height:13.5px;color:#000;">54</div>
<div class="t g" style="left:487.30px;top:500.57px;font-size:13.5px;line-height:13.5px;color:#000;;letter-spacing:0.100px">5.5.4</div>
<div class="t g" style="left:658.80px;top:500.57px;font-size:13.5px;line-height:13.5px;color:#000;;letter-spacing:0.268px">System Use Notification</div>
<div class="t g" style="left:830.30px;top:500.57px;font-size:13.5px;line-height:13.5px;color:#000;;letter-spacing:0.780px">information</div>
<div class="t g" style="left:912.20px;top:500.57px;font-size:13.5px;line-height:13.5px;color:#000;;letter-spacing:0.153px">agency controlled layers which present a system or</div>
<div class="t g" style="left:65.70px;top:521.57px;font-size:13.5px;line-height:13.5px;color:#000;;letter-spacing:0.100px">5.5.4</div>
<div class="t g" style="left:237.30px;top:521.57px;font-size:13.5px;line-height:13.5px;color:#000;;letter-spacing:0.200px">ID.AM-4</div>
<div class="t g" style="left:467.70px;top:521.57px;font-size:13.5px;line-height:13.5px;color:#000;">54</div>
<div class="t g" style="left:487.30px;top:521.57px;font-size:13.5px;line-height:13.5px;color:#000;;letter-spacing:0.100px">5.5.4</div>
<div class="t g" style="left:658.80px;top:521.57px;font-size:13.5px;line-height:13.5px;color:#000;;letter-spacing:0.268px">System Use Notification</div>
<div class="t g" style="left:830.30px;top:521.57px;font-size:13.5px;line-height:13.5px;color:#000;;letter-spacing:0.780px">information</div>
<div class="t g" style="left:912.20px;top:521.57px;font-size:13.5px;line-height:13.5px;color:#000;;letter-spacing:0.153px">agency controlled layers which present a system or</div>
<div class="t g" style="left:65.70px;top:542.57px;font-size:13.5px;line-height:13.5px;color:#000;;letter-spacing:0.100px">5.5.4</div>
<div class="t g" style="left:237.30px;top:542.57px;font-size:13.5px;line-height:13.5px;color:#000;;letter-spacing:0.200px">ID.AM-4</div>
<div class="t g" style="left:467.70px;top:542.57px;font-size:13.5px;line-height:13.5px;color:#000;">54</div>
<div class="t g" style="left:487.30px;top:542.57px;font-size:13.5px;line-height:13.5px;color:#000;;letter-spacing:0.100px">5.5.4</div>
<div class="t g" style="left:658.80px;top:542.57px;font-size:13.5px;line-height:13.5px;color:#000;;letter-spacing:0.268px">System Use Notification</div>
<div class="t g" style="left:830.30px;top:542.57px;font-size:13.5px;line-height:13.5px;color:#000;;letter-spacing:0.780px">information</div>
<div class="t g" style="left:912.20px;top:542.57px;font-size:13.5px;line-height:13.5px;color:#000;;letter-spacing:0.153px">agency controlled layers which present a system or</div>
<div class="t g" style="left:65.70px;top:563.57px;font-size:13.5px;line-height:13.5px;color:#000;;letter-spacing:0.100px">5.5.4</div>
<div class="t g" style="left:237.30px;top:563.57px;font-size:13.5px;line-height:13.5px;color:#000;;transform-origin:1px 0;transform:scaleX(0.9288)">PR.AC-1</div>
<div class="t g" style="left:467.70px;top:563.57px;font-size:13.5px;line-height:13.5px;color:#000;">54</div>
<div class="t g" style="left:487.30px;top:563.57px;font-size:13.5px;line-height:13.5px;color:#000;;letter-spacing:0.100px">5.5.4</div>
<div class="t g" style="left:658.80px;top:563.57px;font-size:13.5px;line-height:13.5px;color:#000;;letter-spacing:0.268px">System Use Notification</div>
<div class="t g" style="left:830.30px;top:563.57px;font-size:13.5px;line-height:13.5px;color:#000;;letter-spacing:0.780px">information</div>
<div class="t g" style="left:912.20px;top:563.57px;font-size:13.5px;line-height:13.5px;color:#000;;letter-spacing:0.153px">agency controlled layers which present a system or</div>
<div class="t g" style="left:65.70px;top:584.57px;font-size:13.5px;line-height:13.5px;color:#000;;letter-spacing:0.100px">5.5.4</div>
<div class="t g" style="left:237.30px;top:584.57px;font-size:13.5px;line-height:13.5px;color:#000;;transform-origin:1px 0;transform:scaleX(0.9288)">PR.AC-1</div>
<div class="t g" style="left:467.70px;top:584.57px;font-size:13.5px;line-height:13.5px;color:#000;">54</div>
<div class="t g" style="left:487.30px;top:584.57px;font-size:13.5px;line-height:13.5px;color:#000;;letter-spacing:0.100px">5.5.4</div>
<div class="t g" style="left:658.80px;top:584.57px;font-size:13.5px;line-height:13.5px;color:#000;;letter-spacing:0.268px">System Use Notification</div>
<div class="t g" style="left:830.30px;top:584.57px;font-size:13.5px;line-height:13.5px;color:#000;;letter-spacing:0.780px">information</div>
<div class="t g" style="left:912.20px;top:584.57px;font-size:13.5px;line-height:13.5px;color:#000;;letter-spacing:0.153px">agency controlled layers which present a system or</div>
<div class="t g" style="left:65.70px;top:605.57px;font-size:13.5px;line-height:13.5px;color:#000;;letter-spacing:0.100px">5.5.4</div>
<div class="t g" style="left:237.30px;top:605.57px;font-size:13.5px;line-height:13.5px;color:#000;;transform-origin:1px 0;transform:scaleX(0.9288)">PR.AC-4</div>
<div class="t g" style="left:467.70px;top:605.57px;font-size:13.5px;line-height:13.5px;color:#000;">54</div>
<div class="t g" style="left:487.30px;top:605.57px;font-size:13.5px;line-height:13.5px;color:#000;;letter-spacing:0.100px">5.5.4</div>
<div class="t g" style="left:658.80px;top:605.57px;font-size:13.5px;line-height:13.5px;color:#000;;letter-spacing:0.268px">System Use Notification</div>
<div class="t g" style="left:830.30px;top:605.57px;font-size:13.5px;line-height:13.5px;color:#000;;letter-spacing:0.780px">information</div>
<div class="t g" style="left:912.20px;top:605.57px;font-size:13.5px;line-height:13.5px;color:#000;;letter-spacing:0.153px">agency controlled layers which present a system or</div>
<div class="t g" style="left:65.70px;top:626.57px;font-size:13.5px;line-height:13.5px;color:#000;;letter-spacing:0.100px">5.5.4</div>
<div class="t g" style="left:237.30px;top:626.57px;font-size:13.5px;line-height:13.5px;color:#000;;letter-spacing:0.200px">ID.AM-4</div>
<div class="t g" style="left:467.70px;top:626.57px;font-size:13.5px;line-height:13.5px;color:#000;">54</div>
<div class="t g" style="left:487.30px;top:626.57px;font-size:13.5px;line-height:13.5px;color:#000;;letter-spacing:0.100px">5.5.4</div>
<div class="t g" style="left:658.80px;top:626.57px;font-size:13.5px;line-height:13.5px;color:#000;;letter-spacing:0.268px">System Use Notification</div>
<div class="t g" style="left:830.30px;top:626.57px;font-size:13.5px;line-height:13.5px;color:#000;;letter-spacing:0.780px">information</div>
<div class="t g" style="left:912.20px;top:626.57px;font-size:13.5px;line-height:13.5px;color:#000;;letter-spacing:0.153px">agency controlled layers which present a system or</div>
<div class="t g" style="left:65.70px;top:647.57px;font-size:13.5px;line-height:13.5px;color:#000;;letter-spacing:0.100px">5.5.4</div>
<div class="t g" style="left:237.30px;top:647.57px;font-size:13.5px;line-height:13.5px;color:#000;;transform-origin:1px 0;transform:scaleX(0.9288)">PR.AC-1</div>
<div class="t g" style="left:467.70px;top:647.57px;font-size:13.5px;line-height:13.5px;color:#000;">54</div>
<div class="t g" style="left:487.30px;top:647.57px;font-size:13.5px;line-height:13.5px;color:#000;;letter-spacing:0.100px">5.5.4</div>
<div class="t g" style="left:658.80px;top:647.57px;font-size:13.5px;line-height:13.5px;color:#000;;letter-spacing:0.268px">System Use Notification</div>
<div class="t g" style="left:830.30px;top:647.57px;font-size:13.5px;line-height:13.5px;color:#000;;letter-spacing:0.780px">information</div>
<div class="t g" style="left:912.20px;top:647.57px;font-size:13.5px;line-height:13.5px;color:#000;;letter-spacing:0.153px">agency controlled layers which present a system or</div>
<div class="t g" style="left:65.70px;top:668.57px;font-size:13.5px;line-height:13.5px;color:#000;;letter-spacing:0.100px">5.5.4</div>
<div class="t g" style="left:237.30px;top:668.57px;font-size:13.5px;line-height:13.5px;color:#000;;transform-origin:1px 0;transform:scaleX(0.9288)">PR.AC-4</div>
<div class="t g" style="left:467.70px;top:668.57px;font-size:13.5px;line-height:13.5px;color:#000;">54</div>
<div class="t g" style="left:487.30px;top:668.57px;font-size:13.5px;line-height:13.5px;color:#000;;letter-spacing:0.100px">5.5.4</div>
<div class="t g" style="left:658.80px;top:668.57px;font-size:13.5px;line-height:13.5px;color:#000;;letter-spacing:0.268px">System Use Notification</div>
<div class="t g" style="left:830.30px;top:668.57px;font-size:13.5px;line-height:13.5px;color:#000;;letter-spacing:0.780px">information</div>
<div class="t g" style="left:912.20px;top:668.57px;font-size:13.5px;line-height:13.5px;color:#000;;letter-spacing:0.153px">agency controlled layers which present a system or</div>
<div class="t g" style="left:65.70px;top:689.57px;font-size:13.5px;line-height:13.5px;color:#000;;letter-spacing:0.100px">5.5.4</div>
<div class="t g" style="left:237.30px;top:689.57px;font-size:13.5px;line-height:13.5px;color:#000;;transform-origin:1px 0;transform:scaleX(0.9288)">PR.AC-3</div>
<div class="t g" style="left:467.70px;top:689.57px;font-size:13.5px;line-height:13.5px;color:#000;">54</div>
<div class="t g" style="left:487.30px;top:689.57px;font-size:13.5px;line-height:13.5px;color:#000;;letter-spacing:0.100px">5.5.4</div>
<div class="t g" style="left:658.80px;top:689.57px;font-size:13.5px;line-height:13.5px;color:#000;;letter-spacing:0.268px">System Use Notification</div>
<div class="t g" style="left:830.30px;top:689.57px;font-size:13.5px;line-height:13.5px;color:#000;;letter-spacing:0.780px">information</div>
<div class="t g" style="left:912.20px;top:689.57px;font-size:13.5px;line-height:13.5px;color:#000;;letter-spacing:0.153px">agency controlled layers which present a system or</div>
<div class="t g" style="left:65.70px;top:710.57px;font-size:13.5px;line-height:13.5px;color:#000;;transform-origin:1px 0;transform:scaleX(0.9897)">5.5.5</div>
<div class="t g" style="left:237.30px;top:710.57px;font-size:13.5px;line-height:13.5px;color:#000;;transform-origin:1px 0;transform:scaleX(0.9288)">PR.AC-4</div>
<div class="t g" style="left:467.70px;top:710.57px;font-size:13.5px;line-height:13.5px;color:#000;">55</div>
<div class="t g" style="left:487.30px;top:710.57px;font-size:13.5px;line-height:13.5px;color:#000;;transform-origin:1px 0;transform:scaleX(0.9897)">5.5.5</div>
<div class="t g" style="left:658.80px;top:710.57px;font-size:13.5px;line-height:13.5px;color:#000;;transform-origin:1px 0;transform:scaleX(0.9684)">Session Lock</div>
<div class="t g" style="left:830.30px;top:710.57px;font-size:13.5px;line-height:13.5px;color:#000;;letter-spacing:0.780px">information</div>
<div class="t g" style="left:911.20px;top:710.57px;font-size:13.5px;line-height:13.5px;color:#000;;letter-spacing:0.362px">identified agency controlled layers will terminate or lock after</div>
<div class="t g" style="left:65.70px;top:731.57px;font-size:13.5px;line-height:13.5px;color:#000;;transform-origin:1px 0;transform:scaleX(0.9897)">5.5.5</div>
<div class="t g" style="left:237.30px;top:731.57px;font-size:13.5px;line-height:13.5px;color:#000;;letter-spacing:0.200px">ID.AM-4</div>
<div class="t g" style="left:467.70px;top:731.57px;font-size:13.5px;line-height:13.5px;color:#000;">55</div>
<div class="t g" style="left:487.30px;top:731.57px;font-size:13.5px;line-height:13.5px;color:#000;;transform-origin:1px 0;transform:scaleX(0.9897)">5.5.5</div>
<div class="t g" style="left:658.80px;top:731.57px;font-size:13.5px;line-height:13.5px;color:#000;;transform-origin:1px 0;transform:scaleX(0.9684)">Session Lock</div>
<div class="t g" style="left:830.30px;top:731.57px;font-size:13.5px;line-height:13.5px;color:#000;;letter-spacing:0.780px">information</div>
<div class="t g" style="left:911.20px;top:731.57px;font-size:13.5px;line-height:13.5px;color:#000;;letter-spacing:0.362px">identified agency controlled layers will terminate or lock after</div>
<div class="t g" style="left:65.70px;top:752.57px;font-size:13.5px;line-height:13.5px;color:#000;;transform-origin:1px 0;transform:scaleX(0.9897)">5.5.5</div>
<div class="t g" style="left:237.30px;top:752.57px;font-size:13.5px;line-height:13.5px;color:#000;;letter-spacing:0.200px">ID.AM-4</div>
<div class="t g" style="left:467.70px;top:752.57px;font-size:13.5px;line-height:13.5px;color:#000;">55</div>
<div class="t g" style="left:487.30px;top:752.57px;font-size:13.5px;line-height:13.5px;color:#000;;transform-origin:1px 0;transform:scaleX(0.9897)">5.5.5</div>
<div class="t g" style="left:658.80px;top:752.57px;font-size:13.5px;line-height:13.5px;color:#000;;transform-origin:1px 0;transform:scaleX(0.9684)">Session Lock</div>
<div class="t g" style="left:830.30px;top:752.57px;font-size:13.5px;line-height:13.5px;color:#000;;letter-spacing:0.780px">information</div>
<div class="t g" style="left:911.20px;top:752.57px;font-size:13.5px;line-height:13.5px;color:#000;;letter-spacing:0.362px">identified agency controlled layers will terminate or lock after</div>
<div class="t g" style="left:65.70px;top:773.57px;font-size:13.5px;line-height:13.5px;color:#000;;transform-origin:1px 0;transform:scaleX(0.9897)">5.5.5</div>
<div class="t g" style="left:237.30px;top:773.57px;font-size:13.5px;line-height:13.5px;color:#000;;letter-spacing:0.200px">ID.AM-4</div>
<div class="t g" style="left:467.70px;top:773.57px;font-size:13.5px;line-height:13.5px;color:#000;">55</div>
<div class="t g" style="left:487.30px;top:773.57px;font-size:13.5px;line-height:13.5px;color:#000;;transform-origin:1px 0;transform:scaleX(0.9897)">5.5.5</div>
<div class="t g" style="left:658.80px;top:773.57px;font-size:13.5px;line-height:13.5px;color:#000;;transform-origin:1px 0;transform:scaleX(0.9684)">Session Lock</div>
<div class="t g" style="left:830.30px;top:773.57px;font-size:13.5px;line-height:13.5px;color:#000;;letter-spacing:0.780px">information</div>
<div class="t g" style="left:911.20px;top:773.57px;font-size:13.5px;line-height:13.5px;color:#000;;letter-spacing:0.362px">identified agency controlled layers will terminate or lock after</div>
<div class="t g" style="left:65.70px;top:794.57px;font-size:13.5px;line-height:13.5px;color:#000;;transform-origin:1px 0;transform:scaleX(0.9897)">5.5.5</div>
<div class="t g" style="left:237.30px;top:794.57px;font-size:13.5px;line-height:13.5px;color:#000;;transform-origin:1px 0;transform:scaleX(0.9288)">PR.AC-1</div>
<div class="t g" style="left:467.70px;top:794.57px;font-size:13.5px;line-height:13.5px;color:#000;">55</div>
<div class="t g" style="left:487.30px;top:794.57px;font-size:13.5px;line-height:13.5px;color:#000;;transform-origin:1px 0;transform:scaleX(0.9897)">5.5.5</div>
<div class="t g" style="left:658.80px;top:794.57px;font-size:13.5px;line-height:13.5px;color:#000;;transform-origin:1px 0;transform:scaleX(0.9684)">Session Lock</div>
<div class="t g" style="left:830.30px;top:794.57px;font-size:13.5px;line-height:13.5px;color:#000;;letter-spacing:0.780px">information</div>
<div class="t g" style="left:911.20px;top:794.57px;font-size:13.5px;line-height:13.5px;color:#000;;letter-spacing:0.362px">identified agency controlled layers will terminate or lock after</div>
<div class="t g" style="left:65.70px;top:815.57px;font-size:13.5px;line-height:13.5px;color:#000;;transform-origin:1px 0;transform:scaleX(0.9897)">5.5.5</div>
<div class="t g" style="left:237.30px;top:815.57px;font-size:13.5px;line-height:13.5px;color:#000;;transform-origin:1px 0;transform:scaleX(0.9288)">PR.AC-1</div>
<div class="t g" style="left:467.70px;top:815.57px;font-size:13.5px;line-height:13.5px;color:#000;">55</div>
<div class="t g" style="left:487.30px;top:815.57px;font-size:13.5px;line-height:13.5px;color:#000;;transform-origin:1px 0;transform:scaleX(0.9897)">5.5.5</div>
<div class="t g" style="left:658.80px;top:815.57px;font-size:13.5px;line-height:13.5px;color:#000;;transform-origin:1px 0;transform:scaleX(0.9684)">Session Lock</div>
<div class="t g" style="left:830.30px;top:815.57px;font-size:13.5px;line-height:13.5px;color:#000;;letter-spacing:0.780px">information</div>
<div class="t g" style="left:911.20px;top:815.57px;font-size:13.5px;line-height:13.5px;color:#000;;letter-spacing:0.362px">identified agency controlled layers will terminate or lock after</div>
<div class="t g" style="left:65.70px;top:836.57px;font-size:13.5px;line-height:13.5px;color:#000;;transform-origin:1px 0;transform:scaleX(0.9897)">5.5.5</div>
<div class="t g" style="left:237.30px;top:836.57px;font-size:13.5px;line-height:13.5px;color:#000;;transform-origin:1px 0;transform:scaleX(0.9288)">PR.AC-4</div>
<div class="t g" style="left:467.70px;top:836.57px;font-size:13.5px;line-height:13.5px;color:#000;">55</div>
<div class="t g" style="left:487.30px;top:836.57px;font-size:13.5px;line-height:13.5px;color:#000;;transform-origin:1px 0;transform:scaleX(0.9897)">5.5.5</div>
<div class="t g" style="left:658.80px;top:836.57px;font-size:13.5px;line-height:13.5px;color:#000;;transform-origin:1px 0;transform:scaleX(0.9684)">Session Lock</div>
<div class="t g" style="left:830.30px;top:836.57px;font-size:13.5px;line-height:13.5px;color:#000;;letter-spacing:0.780px">information</div>
<div class="t g" style="left:911.20px;top:836.57px;font-size:13.5px;line-height:13.5px;color:#000;;letter-spacing:0.362px">identified agency controlled layers will terminate or lock after</div>
<div class="t g" style="left:65.70px;top:857.57px;font-size:13.5px;line-height:13.5px;color:#000;;transform-origin:1px 0;transform:scaleX(0.9897)">5.5.5</div>
<div class="t g" style="left:237.30px;top:857.57px;font-size:13.5px;line-height:13.5px;color:#000;;letter-spacing:0.200px">ID.AM-4</div>
<div class="t g" style="left:467.70px;top:857.57px;font-size:13.5px;line-height:13.5px;color:#000;">55</div>
<div class="t g" style="left:487.30px;top:857.57px;font-size:13.5px;line-height:13.5px;color:#000;;transform-origin:1px 0;transform:scaleX(0.9897)">5.5.5</div>
<div class="t g" style="left:658.80px;top:857.57px;font-size:13.5px;line-height:13.5px;color:#000;;transform-origin:1px 0;transform:scaleX(0.9684)">Session Lock</div>
<div class="t g" style="left:830.30px;top:857.57px;font-size:13.5px;line-height:13.5px;color:#000;;letter-spacing:0.780px">information</div>
<div class="t g" style="left:911.20px;top:857.57px;font-size:13.5px;line-height:13.5px;color:#000;;letter-spacing:0.362px">identified agency controlled layers will terminate or lock after</div>
<div class="t g" style="left:65.70px;top:878.57px;font-size:13.5px;line-height:13.5px;color:#000;;transform-origin:1px 0;transform:scaleX(0.9897)">5.5.5</div>
<div class="t g" style="left:237.30px;top:878.57px;font-size:13.5px;line-height:13.5px;color:#000;;transform-origin:1px 0;transform:scaleX(0.9288)">PR.AC-1</div>
<div class="t g" style="left:467.70px;top:878.57px;font-size:13.5px;line-height:13.5px;color:#000;">55</div>
<div class="t g" style="left:487.30px;top:878.57px;font-size:13.5px;line-height:13.5px;color:#000;;transform-origin:1px 0;transform:scaleX(0.9897)">5.5.5</div>
<div class="t g" style="left:658.80px;top:878.57px;font-size:13.5px;line-height:13.5px;color:#000;;transform-origin:1px 0;transform:scaleX(0.9684)">Session Lock</div>
<div class="t g" style="left:830.30px;top:878.57px;font-size:13.5px;line-height:13.5px;color:#000;;letter-spacing:0.780px">information</div>
<div class="t g" style="left:911.20px;top:878.57px;font-size:13.5px;line-height:13.5px;color:#000;;letter-spacing:0.362px">identified agency controlled layers will terminate or lock after</div>
<!-- move cursor -->
<svg class="a" style="left:124px;top:212px" width="18" height="19">
  <path d="M6 2.5 H11 V7 H15.5 V12 H11 V16.5 H6 V12 H1.5 V7 H6 Z" transform="translate(1,1)" fill="#000" stroke="#000" stroke-width="1.2"/>
  <path d="M6 2.5 H11 V7 H15.5 V12 H11 V16.5 H6 V12 H1.5 V7 H6 Z" fill="#fff" stroke="#000" stroke-width="1.2"/>
</svg>

<!-- vertical scrollbar -->
<div class="a" style="left:1302px;top:121px;width:15px;height:15px;background:#fff;border:1px solid #ababab;box-sizing:border-box"></div>
<svg class="a" style="left:1302px;top:121px" width="15" height="15"><path d="M4 9.5 H11 L7.5 5.5 Z" fill="#606060"/></svg>
<div class="a" style="left:1302px;top:135px;width:15px;height:18px;background:#fff;border:1px solid #ababab;box-sizing:border-box"></div>
<div class="a" style="left:1303px;top:153px;width:13px;height:723px;background:#dadada"></div>
<div class="a" style="left:1302px;top:875px;width:15px;height:15px;background:#fff;border:1px solid #ababab;box-sizing:border-box"></div>
<svg class="a" style="left:1302px;top:875px" width="15" height="15"><path d="M4 5.5 H11 L7.5 9.5 Z" fill="#606060"/></svg>

<!-- sheet tabs bar -->
<div class="a" style="left:38px;top:891px;width:1280px;height:27px;background:#e6e6e6"></div>
<svg class="a" style="left:60px;top:896px" width="45" height="16"><path d="M10 3 V13 L5 8 Z" fill="#c0c0c0"/><path d="M33 3 V13 L38 8 Z" fill="#c0c0c0"/></svg>
<div class="a" style="left:138px;top:894px;width:1px;height:20px;background:#9a9a9a"></div>
<div class="a" style="left:193px;top:890px;width:49px;height:24px;background:#fff;border-left:1px solid #a8a8a8;border-right:1px solid #a8a8a8"></div>
<div class="a" style="left:193px;top:913px;width:51px;height:2px;background:#217346"></div>
<svg class="a" style="left:275px;top:894px" width="20" height="20">
  <circle cx="10" cy="10" r="7.3" fill="none" stroke="#7a7a7a" stroke-width="1.3"/>
  <path d="M10 6 V14 M6 10 H14" stroke="#7a7a7a" stroke-width="1.8"/>
</svg>
<svg class="a" style="left:804px;top:896px" width="8" height="16"><g fill="#a0a0a0"><rect x="3" y="3" width="2" height="2"/><rect x="3" y="7" width="2" height="2"/><rect x="3" y="11" width="2" height="2"/></g></svg>
<div class="a" style="left:824px;top:897px;width:457px;height:15px;background:#dadada"></div>
<div class="a" style="left:824px;top:897px;width:15px;height:15px;background:#fff;border:1px solid #ababab;box-sizing:border-box"></div>
<svg class="a" style="left:824px;top:897px" width="15" height="15"><path d="M9.5 3.5 V11 L5 7.25 Z" fill="#606060"/></svg>
<div class="a" style="left:838px;top:897px;width:172px;height:15px;background:#fff;border:1px solid #ababab;box-sizing:border-box"></div>
<div class="a" style="left:1281px;top:897px;width:15px;height:15px;background:#fff;border:1px solid #ababab;box-sizing:border-box"></div>
<svg class="a" style="left:1281px;top:897px" width="15" height="15"><path d="M5.5 3.5 V11 L10 7.25 Z" fill="#606060"/></svg>

<!-- status bar -->
<div class="a" style="left:0;top:917px;width:38px;height:1px;background:#c6c6c6"></div>
<div class="a" style="left:0;top:918px;width:1318px;height:1px;background:#c8c8c8"></div>
<div class="a" style="left:0;top:919px;width:1318px;height:30px;background:#f0f0f0"></div>
<div class="a" style="left:981px;top:919px;width:46px;height:30px;background:#c6c6c6"></div>
<svg class="a" style="left:990px;top:922px" width="130" height="26">
  <g fill="none" stroke="#6d6d6d" stroke-width="1.4">
    <rect x="6.5" y="5.5" width="15" height="15"/><path d="M11.5 5.5 V20.5 M16.5 5.5 V20.5 M6.5 10.5 H21.5 M6.5 15.5 H21.5"/>
    <rect x="51.5" y="5.5" width="16" height="15"/><rect x="54.5" y="7.5" width="10" height="11" stroke-width="1.1"/><path d="M56.5 10.5 H62.5 M56.5 13 H62.5 M56.5 15.5 H62.5" stroke-width="1.1"/>
    <rect x="97.5" y="5.5" width="16" height="15"/><path d="M97.5 13.5 H106.5 V5.5 M101.5 5.5 V13.5"/>
  </g>
</svg>
<svg class="a" style="left:1120px;top:922px" width="130" height="26">
  <rect x="4" y="11.3" width="6" height="1.8" fill="#6d6d6d"/>
  <rect x="14" y="11.5" width="100" height="1" fill="#a0a0a0"/>
  <rect x="62" y="6" width="4.3" height="11" fill="#6d6d6d"/>
  <path d="M118.5 12.2 H125.5 M122 8.7 V15.7" stroke="#6d6d6d" stroke-width="1.8"/>
</svg>
<div class="t" style="left:545.80px;top:11.42px;font-size:12.5px;line-height:12.5px;color:#fff;;transform-origin:1px 0;transform:scaleX(0.9632)">MappingsReportingToolNightLion  -  Excel</div>
<div class="t" style="left:1059.20px;top:12.42px;font-size:12.5px;line-height:12.5px;color:#fff;;transform-origin:0px 0;transform:scaleX(0.9387)">Vinny Troia</div>
<div class="t" style="left:21.50px;top:46.42px;font-size:12.5px;line-height:12.5px;color:#fff;;transform-origin:1px 0;transform:scaleX(0.9316)">File</div>
<div class="t" style="left:80.50px;top:45.42px;font-size:12.5px;line-height:12.5px;color:#fff;;letter-spacing:0.200px">Home</div>
<div class="t" style="left:146.20px;top:45.42px;font-size:12.5px;line-height:12.5px;color:#fff;;transform-origin:1px 0;transform:scaleX(0.9600)">Insert</div>
<div class="t" style="left:208.50px;top:45.42px;font-size:12.5px;line-height:12.5px;color:#fff;;transform-origin:1px 0;transform:scaleX(0.9319)">Page Layout</div>
<div class="t" style="left:306.50px;top:45.42px;font-size:12.5px;line-height:12.5px;color:#fff;;transform-origin:1px 0;transform:scaleX(0.9529)">Formulas</div>
<div class="t" style="left:388.40px;top:45.42px;font-size:12.5px;line-height:12.5px;color:#fff;;transform-origin:1px 0;transform:scaleX(0.8923)">Data</div>
<div class="t" style="left:445.40px;top:45.42px;font-size:12.5px;line-height:12.5px;color:#fff;;transform-origin:1px 0;transform:scaleX(0.9025)">Review</div>
<div class="t" style="left:516.00px;top:45.42px;font-size:12.5px;line-height:12.5px;color:#fff;;transform-origin:0px 0;transform:scaleX(0.9222)">View</div>
<div class="t" style="left:573.30px;top:45.42px;font-size:12.5px;line-height:12.5px;color:#fff;;transform-origin:1px 0;transform:scaleX(0.9107)">Kutools ™</div>
<div class="t" style="left:658.20px;top:45.42px;font-size:12.5px;line-height:12.5px;color:#fff;;transform-origin:1px 0;transform:scaleX(0.9232)">Enterprise</div>
<div class="t" style="left:759.80px;top:45.42px;font-size:12.5px;line-height:12.5px;color:#dfeee5;;transform-origin:0px 0;transform:scaleX(0.9721)">Tell me what you want to do</div>
<div class="t" style="left:1259.00px;top:45.42px;font-size:12.5px;line-height:12.5px;color:#fff;;transform-origin:1px 0;transform:scaleX(0.8969)">Share</div>
<div class="t" style="left:11.40px;top:91.42px;font-size:12.5px;line-height:12.5px;color:#222;;transform-origin:0px 0;transform:scaleX(0.9609)">G86</div>
<div class="t" style="left:150.50px;top:898.42px;font-size:12.5px;line-height:12.5px;color:#444;;letter-spacing:0.767px">Main</div>
<div class="t" style="left:205.30px;top:898.42px;font-size:12.5px;line-height:12.5px;color:#217346;font-weight:bold;letter-spacing:0.033px">data</div>
<div class="t" style="left:12.60px;top:928.27px;font-size:11.5px;line-height:11.5px;color:#555;;transform-origin:1px 0;transform:scaleX(0.9500)">Ready</div>
<div class="t" style="left:1267.80px;top:928.27px;font-size:11.5px;line-height:11.5px;color:#555;;transform-origin:1px 0;transform:scaleX(0.9250)">100%</div>
</body></html>
